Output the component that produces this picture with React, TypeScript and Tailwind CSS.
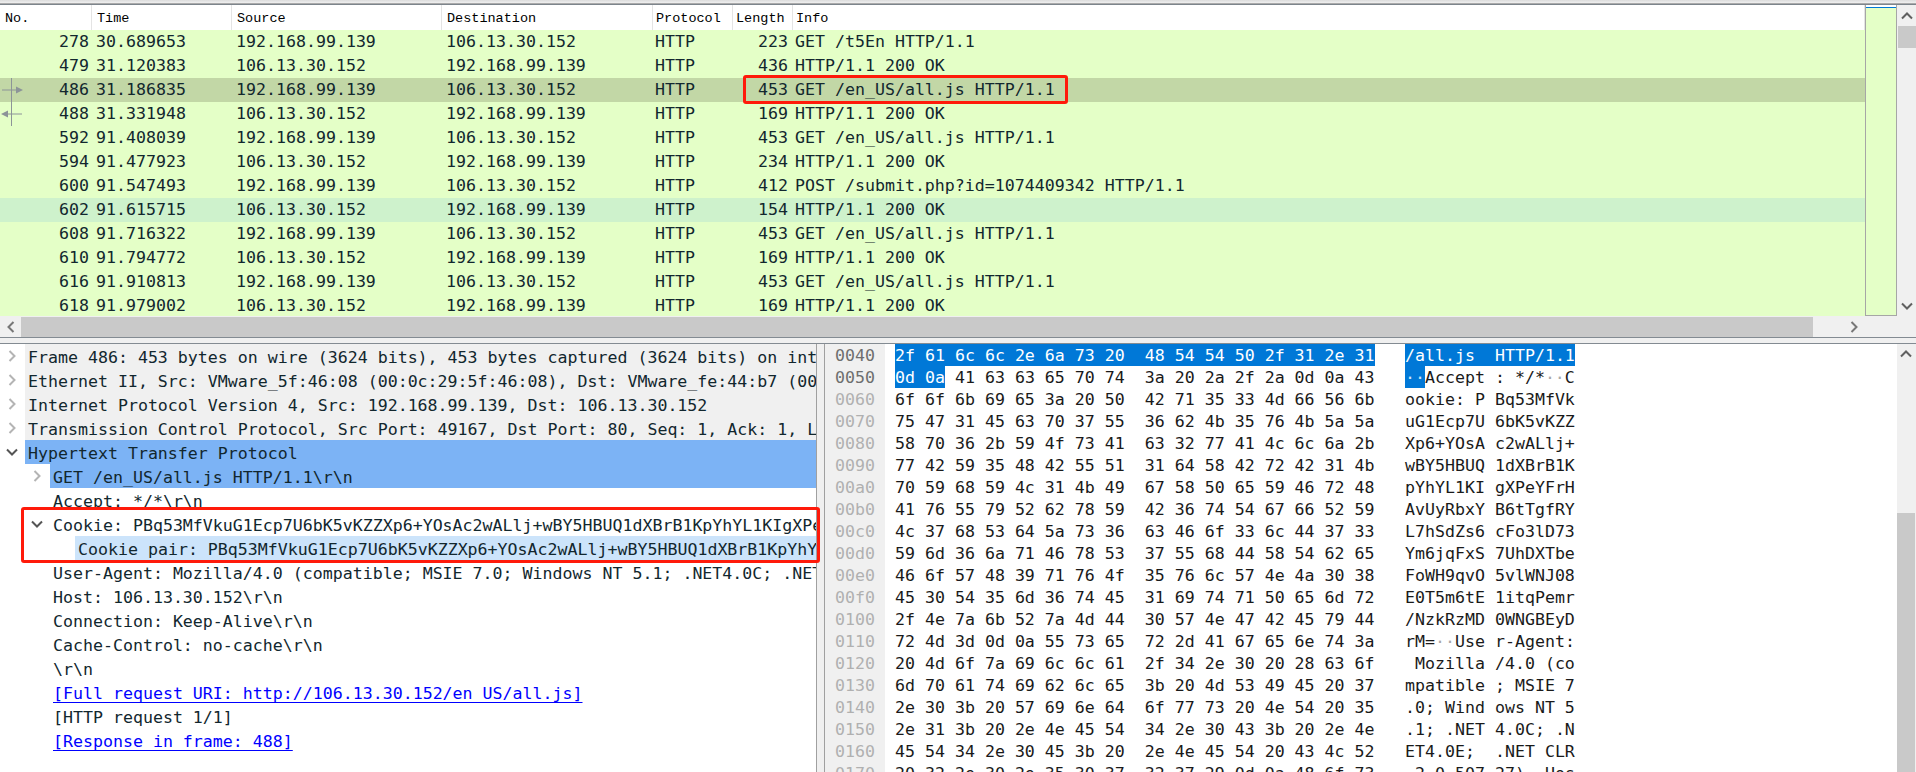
const mono = "font-['DejaVu_Sans_Mono','Liberation_Mono',monospace]";

const packets = [
  ["278", "30.689653", "192.168.99.139", "106.13.30.152", "223", "GET /t5En HTTP/1.1"],
  ["479", "31.120383", "106.13.30.152", "192.168.99.139", "436", "HTTP/1.1 200 OK"],
  ["486", "31.186835", "192.168.99.139", "106.13.30.152", "453", "GET /en_US/all.js HTTP/1.1"],
  ["488", "31.331948", "106.13.30.152", "192.168.99.139", "169", "HTTP/1.1 200 OK"],
  ["592", "91.408039", "192.168.99.139", "106.13.30.152", "453", "GET /en_US/all.js HTTP/1.1"],
  ["594", "91.477923", "106.13.30.152", "192.168.99.139", "234", "HTTP/1.1 200 OK"],
  ["600", "91.547493", "192.168.99.139", "106.13.30.152", "412", "POST /submit.php?id=1074409342 HTTP/1.1"],
  ["602", "91.615715", "106.13.30.152", "192.168.99.139", "154", "HTTP/1.1 200 OK"],
  ["608", "91.716322", "192.168.99.139", "106.13.30.152", "453", "GET /en_US/all.js HTTP/1.1"],
  ["610", "91.794772", "106.13.30.152", "192.168.99.139", "169", "HTTP/1.1 200 OK"],
  ["616", "91.910813", "192.168.99.139", "106.13.30.152", "453", "GET /en_US/all.js HTTP/1.1"],
  ["618", "91.979002", "106.13.30.152", "192.168.99.139", "169", "HTTP/1.1 200 OK"],
];

const hexRows = [
  ["0040", "2f 61 6c 6c 2e 6a 73 20", "48 54 54 50 2f 31 2e 31", "/all.js ", "HTTP/1.1"],
  ["0050", "0d 0a 41 63 63 65 70 74", "3a 20 2a 2f 2a 0d 0a 43", "··Accept", ": */*··C"],
  ["0060", "6f 6f 6b 69 65 3a 20 50", "42 71 35 33 4d 66 56 6b", "ookie: P", "Bq53MfVk"],
  ["0070", "75 47 31 45 63 70 37 55", "36 62 4b 35 76 4b 5a 5a", "uG1Ecp7U", "6bK5vKZZ"],
  ["0080", "58 70 36 2b 59 4f 73 41", "63 32 77 41 4c 6c 6a 2b", "Xp6+YOsA", "c2wALlj+"],
  ["0090", "77 42 59 35 48 42 55 51", "31 64 58 42 72 42 31 4b", "wBY5HBUQ", "1dXBrB1K"],
  ["00a0", "70 59 68 59 4c 31 4b 49", "67 58 50 65 59 46 72 48", "pYhYL1KI", "gXPeYFrH"],
  ["00b0", "41 76 55 79 52 62 78 59", "42 36 74 54 67 66 52 59", "AvUyRbxY", "B6tTgfRY"],
  ["00c0", "4c 37 68 53 64 5a 73 36", "63 46 6f 33 6c 44 37 33", "L7hSdZs6", "cFo3lD73"],
  ["00d0", "59 6d 36 6a 71 46 78 53", "37 55 68 44 58 54 62 65", "Ym6jqFxS", "7UhDXTbe"],
  ["00e0", "46 6f 57 48 39 71 76 4f", "35 76 6c 57 4e 4a 30 38", "FoWH9qvO", "5vlWNJ08"],
  ["00f0", "45 30 54 35 6d 36 74 45", "31 69 74 71 50 65 6d 72", "E0T5m6tE", "1itqPemr"],
  ["0100", "2f 4e 7a 6b 52 7a 4d 44", "30 57 4e 47 42 45 79 44", "/NzkRzMD", "0WNGBEyD"],
  ["0110", "72 4d 3d 0d 0a 55 73 65", "72 2d 41 67 65 6e 74 3a", "rM=··Use", "r-Agent:"],
  ["0120", "20 4d 6f 7a 69 6c 6c 61", "2f 34 2e 30 20 28 63 6f", " Mozilla", "/4.0 (co"],
  ["0130", "6d 70 61 74 69 62 6c 65", "3b 20 4d 53 49 45 20 37", "mpatible", "; MSIE 7"],
  ["0140", "2e 30 3b 20 57 69 6e 64", "6f 77 73 20 4e 54 20 35", ".0; Wind", "ows NT 5"],
  ["0150", "2e 31 3b 20 2e 4e 45 54", "34 2e 30 43 3b 20 2e 4e", ".1; .NET", "4.0C; .N"],
  ["0160", "45 54 34 2e 30 45 3b 20", "2e 4e 45 54 20 43 4c 52", "ET4.0E; ", ".NET CLR"],
  ["0170", "20 32 2e 30 2e 35 30 37", "32 37 29 0d 0a 48 6f 73", " 2.0.507", "27)··Hos"],
];

function Chevron({ dir, className }: { dir: "up" | "down" | "left" | "right"; className: string }) {
  const d = {
    up: "M1 8.5 L6 3.5 L11 8.5",
    down: "M1 3.5 L6 8.5 L11 3.5",
    left: "M8.5 1 L3.5 6 L8.5 11",
    right: "M3.5 1 L8.5 6 L3.5 11",
  }[dir];
  return (
    <svg width="12" height="12" viewBox="0 0 12 12" className={className}>
      <path d={d} fill="none" stroke="currentColor" strokeWidth="2" />
    </svg>
  );
}

function Head({ w, label, pad = "pl-[5px]" }: { w: string; label: string; pad?: string }) {
  return (
    <div className={`${w} ${pad} h-full shrink-0 border-r border-[#e4e4e4] font-['Liberation_Mono',monospace] text-[13.5px] leading-[27px] text-black`}>
      {label}
    </div>
  );
}

function PacketRow({ p }: { p: string[] }) {
  const bg = p[0] === "486" ? "bg-[#c2d7a6]" : p[0] === "602" ? "bg-[#cef2cc]" : "bg-[#e4ffc7]";
  return (
    <div className={`${bg} relative flex h-[24px] shrink-0 items-center whitespace-pre text-[16.6px] text-[#12272e]`}>
      <div className="w-[92px] shrink-0 pr-[3px] text-right">{p[0]}</div>
      <div className="w-[140px] shrink-0 pl-[4px]">{p[1]}</div>
      <div className="w-[210px] shrink-0 pl-[4px]">{p[2]}</div>
      <div className="w-[210px] shrink-0 pl-[4px]">{p[3]}</div>
      <div className="w-[78px] shrink-0 pl-[3px]">HTTP</div>
      <div className="w-[61px] shrink-0 pr-[3px] text-right">{p[4]}</div>
      <div className="pl-[4px]">{p[5]}</div>
      {p[0] === "486" && (
        <>
          <svg width="24" height="24" viewBox="0 0 24 24" className="absolute left-0 top-0">
            <path d="M2 12 H17" stroke="#8c9498" strokeWidth="1" />
            <path d="M11.5 0 V24" stroke="#8c9498" strokeWidth="1" />
            <path d="M16 8.5 L23 12 L16 15.5 Z" fill="#8c9498" />
          </svg>
          <div className="absolute left-[743px] top-[-3px] z-10 h-[29px] w-[325px] rounded-[3px] border-[3px] border-[#ff1a0a]" />
        </>
      )}
      {p[0] === "488" && (
        <svg width="24" height="24" viewBox="0 0 24 24" className="absolute left-0 top-0">
          <path d="M6 12 H22" stroke="#8c9498" strokeWidth="1" />
          <path d="M11.5 0 V24" stroke="#8c9498" strokeWidth="1" />
          <path d="M8 8.5 L1 12 L8 15.5 Z" fill="#8c9498" />
        </svg>
      )}
    </div>
  );
}

function TreeRow({
  label,
  indent,
  arrow,
  bg = "",
  link = false,
}: {
  label: string;
  indent: 0 | 1 | 2;
  arrow?: "right" | "down";
  bg?: string;
  link?: boolean;
}) {
  const pad = indent === 0 ? "pl-[25px]" : indent === 1 ? "pl-[50px]" : "pl-[75px]";
  const arrowPos = indent === 0 ? "left-[6px]" : "left-[31px]";
  return (
    <div className={`${pad} relative h-[24px] shrink-0`}>
      {arrow && (
        <Chevron
          dir={arrow}
          className={`${arrowPos} absolute top-[6px] ${arrow === "right" ? "text-[#b4b4b4]" : "text-[#555]"}`}
        />
      )}
      <div className={`${bg} h-full overflow-hidden whitespace-pre pl-[3px] leading-[28px] ${link ? "text-[#0000ff] underline underline-offset-[3px]" : "text-[#12272e]"}`}>
        {label}
      </div>
    </div>
  );
}

function Ascii({ text }: { text: string }) {
  return (
    <>
      {text.split(/(·+)/).map((part, i) =>
        part.startsWith("·") ? (
          <span key={i} className="text-[#a8a8a8]">{part}</span>
        ) : (
          <span key={i}>{part}</span>
        ),
      )}
    </>
  );
}

export default function App() {
  return (
    <div className={`${mono} flex h-[772px] w-[1916px] flex-col overflow-hidden bg-[#f0f0f0]`}>
      <div className="h-[4px] shrink-0 bg-[linear-gradient(#dcdcdc,#f0f0f0)] border-b border-[#aaaaaa]" />
      <div className="h-px shrink-0 bg-[#7d858c]" />

      <div className="flex h-[332px] shrink-0">
        <div className="flex w-[1865px] shrink-0 flex-col">
          <div className="flex h-[25px] shrink-0 bg-white">
            <Head w="w-[92px]" label="No." />
            <Head w="w-[140px]" label="Time" />
            <Head w="w-[210px]" label="Source" />
            <Head w="w-[211px]" label="Destination" />
            <Head w="w-[80px]" pad="pl-[3px]" label="Protocol" />
            <Head w="w-[60px]" pad="pl-[3px]" label="Length" />
            <Head w="flex-1" pad="pl-[3px]" label="Info" />
          </div>
          <div className="flex h-[286px] shrink-0 flex-col">
            {packets.slice(0, 11).map((p) => (
              <PacketRow key={p[0]} p={p} />
            ))}
            <div className="h-[22px] shrink-0 overflow-hidden">
              <PacketRow p={packets[11]} />
            </div>
          </div>
          <div className="mt-px flex h-[20px] shrink-0 items-center">
            <div className="flex w-[21px] justify-center text-[#777]">
              <Chevron dir="left" className="" />
            </div>
            <div className="h-full w-[1792px] bg-[#c9c9c9]" />
            <div className="flex flex-1 justify-end pr-[5px] text-[#777]">
              <Chevron dir="right" className="" />
            </div>
          </div>
        </div>

        <div className="flex h-[311px] w-[32px] shrink-0 flex-col border-x border-b border-[#a6a6a6] bg-[#e4ffc7]">
          <div className="h-[2px] shrink-0 bg-white" />
          <div className="h-px shrink-0 bg-[#0078d7]" />
        </div>

        <div className="ml-px flex h-[311px] w-[18px] shrink-0 flex-col">
          <div className="flex h-[21px] shrink-0 items-center justify-center text-[#606060]">
            <Chevron dir="up" className="" />
          </div>
          <div className="h-[22px] shrink-0 bg-[#c9c9c9]" />
          <div className="flex-1" />
          <div className="flex h-[20px] shrink-0 items-center justify-center text-[#606060]">
            <Chevron dir="down" className="" />
          </div>
        </div>
      </div>

      <div className="h-[7px] shrink-0 border-y border-[#838b92]" />

      <div className="flex min-h-0 flex-1">
        <div className="relative h-full w-[817px] shrink-0 border-r border-[#a0a0a0] bg-white text-[16.6px]">
          <div className="flex h-full flex-col overflow-hidden">
            <TreeRow indent={0} arrow="right" bg="bg-[#f0f0f0]" label="Frame 486: 453 bytes on wire (3624 bits), 453 bytes captured (3624 bits) on int" />
            <TreeRow indent={0} arrow="right" bg="bg-[#f0f0f0]" label="Ethernet II, Src: VMware_5f:46:08 (00:0c:29:5f:46:08), Dst: VMware_fe:44:b7 (00" />
            <TreeRow indent={0} arrow="right" bg="bg-[#f0f0f0]" label="Internet Protocol Version 4, Src: 192.168.99.139, Dst: 106.13.30.152" />
            <TreeRow indent={0} arrow="right" bg="bg-[#f0f0f0]" label="Transmission Control Protocol, Src Port: 49167, Dst Port: 80, Seq: 1, Ack: 1, L" />
            <TreeRow indent={0} arrow="down" bg="bg-[#7cb3f5]" label="Hypertext Transfer Protocol" />
            <TreeRow indent={1} arrow="right" bg="bg-[#7cb3f5]" label="GET /en_US/all.js HTTP/1.1\r\n" />
            <TreeRow indent={1} label="Accept: */*\r\n" />
            <TreeRow indent={1} arrow="down" label="Cookie: PBq53MfVkuG1Ecp7U6bK5vKZZXp6+YOsAc2wALlj+wBY5HBUQ1dXBrB1KpYhYL1KIgXPe" />
            <TreeRow indent={2} bg="bg-[#cce4fb]" label="Cookie pair: PBq53MfVkuG1Ecp7U6bK5vKZZXp6+YOsAc2wALlj+wBY5HBUQ1dXBrB1KpYhY" />
            <TreeRow indent={1} label="User-Agent: Mozilla/4.0 (compatible; MSIE 7.0; Windows NT 5.1; .NET4.0C; .NET" />
            <TreeRow indent={1} label="Host: 106.13.30.152\r\n" />
            <TreeRow indent={1} label="Connection: Keep-Alive\r\n" />
            <TreeRow indent={1} label="Cache-Control: no-cache\r\n" />
            <TreeRow indent={1} label="\r\n" />
            <TreeRow indent={1} link label="[Full request URI: http://106.13.30.152/en_US/all.js]" />
            <TreeRow indent={1} label="[HTTP request 1/1]" />
            <TreeRow indent={1} link label="[Response in frame: 488]" />
          </div>
          <div className="absolute left-[21px] top-[163px] h-[56px] w-[799px] rounded-[3px] border-[3px] border-[#ff1a0a]" />
        </div>

        <div className="w-[7px] shrink-0" />

        <div className="flex h-full w-[1073px] shrink-0 flex-col overflow-hidden border-l border-[#a0a0a0] bg-white text-[16.6px] leading-[24px]">
          {hexRows.map((r, i) => (
            <div key={r[0]} className="flex h-[22px] shrink-0 whitespace-pre">
              <div className={`w-[60px] shrink-0 bg-[#f0f0f0] pl-[10px] ${i < 2 ? "text-[#6e6e6e]" : "text-[#b0b0b0]"}`}>{r[0]}</div>
              <div className="flex w-[520px] shrink-0 pl-[10px] text-[#1a1a1a]">
                {i === 0 ? (
                  <span className="h-[22px] w-[480px] bg-[#0078d7] text-white">{r[1]}  {r[2]}</span>
                ) : i === 1 ? (
                  <>
                    <span className="h-[22px] bg-[#0078d7] text-white">0d 0a</span>
                    <span> 41 63 63 65 70 74  {r[2]}</span>
                  </>
                ) : (
                  <span>{r[1]}  {r[2]}</span>
                )}
              </div>
              <div className="flex text-[#1a1a1a]">
                {i === 0 ? (
                  <span className="h-[22px] bg-[#0078d7] text-white">{r[3]} {r[4]}</span>
                ) : i === 1 ? (
                  <>
                    <span className="h-[22px] bg-[#0078d7] text-[#cfe4f7]">··</span>
                    <span>Accept <Ascii text={r[4]} /></span>
                  </>
                ) : (
                  <span><Ascii text={r[3]} /> <Ascii text={r[4]} /></span>
                )}
              </div>
            </div>
          ))}
        </div>

        <div className="flex h-full w-[18px] shrink-0 flex-col">
          <div className="flex h-[20px] shrink-0 items-center justify-center text-[#606060]">
            <Chevron dir="up" className="" />
          </div>
          <div className="h-[149px] shrink-0" />
          <div className="flex-1 bg-[#c9c9c9]" />
        </div>
      </div>
    </div>
  );
}
